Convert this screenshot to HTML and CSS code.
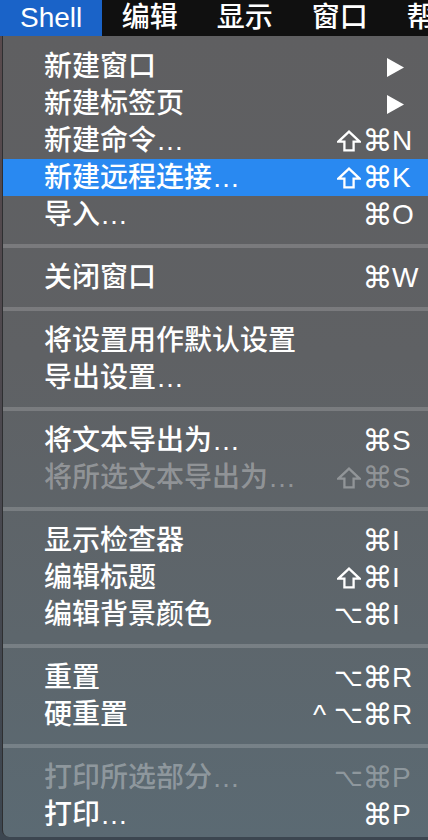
FILE: index.html
```html
<!DOCTYPE html>
<html lang="zh-CN">
<head>
<meta charset="utf-8">
<title>Shell 菜单</title>
<link rel="stylesheet" href="styles.css">
</head>
<body>
<div class="screen">
  <div class="menubar">
    <span class="title active">Shell</span>
    <span class="title">编辑</span>
    <span class="title">显示</span>
    <span class="title">窗口</span>
    <span class="title">帮助</span>
  </div>
  <div class="menu">
    <div class="item"><span class="label">新建窗口</span><span class="sub"><svg viewBox="0 0 18 19" width="18" height="19"><polygon points="1,0 18,9.5 1,19" fill="#fff"/></svg></span></div>
    <div class="item"><span class="label">新建标签页</span><span class="sub"><svg viewBox="0 0 18 19" width="18" height="19"><polygon points="1,0 18,9.5 1,19" fill="#fff"/></svg></span></div>
    <div class="item"><span class="label">新建命令…</span><span class="mods"><span class="m"><svg class="shift" viewBox="0 0 24 22" width="24" height="22" role="img" aria-label="⇧"><path d="M12 1.6 L22.6 11.6 H16.6 V20.4 H7.4 V11.6 H1.4 Z" fill="none" stroke="currentColor" stroke-width="2.3" stroke-linejoin="miter"/></svg></span><span class="m">⌘</span></span><span class="key">N</span></div>
    <div class="item selected"><span class="label">新建远程连接…</span><span class="mods"><span class="m"><svg class="shift" viewBox="0 0 24 22" width="24" height="22" role="img" aria-label="⇧"><path d="M12 1.6 L22.6 11.6 H16.6 V20.4 H7.4 V11.6 H1.4 Z" fill="none" stroke="currentColor" stroke-width="2.3" stroke-linejoin="miter"/></svg></span><span class="m">⌘</span></span><span class="key">K</span></div>
    <div class="item"><span class="label">导入…</span><span class="mods"><span class="m">⌘</span></span><span class="key">O</span></div>
    <div class="sep"></div>
    <div class="item"><span class="label">关闭窗口</span><span class="mods"><span class="m">⌘</span></span><span class="key">W</span></div>
    <div class="sep"></div>
    <div class="item"><span class="label">将设置用作默认设置</span></div>
    <div class="item"><span class="label">导出设置…</span></div>
    <div class="sep"></div>
    <div class="item"><span class="label">将文本导出为…</span><span class="mods"><span class="m">⌘</span></span><span class="key">S</span></div>
    <div class="item disabled"><span class="label">将所选文本导出为…</span><span class="mods"><span class="m"><svg class="shift" viewBox="0 0 24 22" width="24" height="22" role="img" aria-label="⇧"><path d="M12 1.6 L22.6 11.6 H16.6 V20.4 H7.4 V11.6 H1.4 Z" fill="none" stroke="currentColor" stroke-width="2.3" stroke-linejoin="miter"/></svg></span><span class="m">⌘</span></span><span class="key">S</span></div>
    <div class="sep"></div>
    <div class="item"><span class="label">显示检查器</span><span class="mods"><span class="m">⌘</span></span><span class="key">I</span></div>
    <div class="item"><span class="label">编辑标题</span><span class="mods"><span class="m"><svg class="shift" viewBox="0 0 24 22" width="24" height="22" role="img" aria-label="⇧"><path d="M12 1.6 L22.6 11.6 H16.6 V20.4 H7.4 V11.6 H1.4 Z" fill="none" stroke="currentColor" stroke-width="2.3" stroke-linejoin="miter"/></svg></span><span class="m">⌘</span></span><span class="key">I</span></div>
    <div class="item"><span class="label">编辑背景颜色</span><span class="mods"><span class="m opt">⌥</span><span class="m">⌘</span></span><span class="key">I</span></div>
    <div class="sep"></div>
    <div class="item"><span class="label">重置</span><span class="mods"><span class="m opt">⌥</span><span class="m">⌘</span></span><span class="key">R</span></div>
    <div class="item"><span class="label">硬重置</span><span class="mods"><span class="m caret">^</span><span class="m opt">⌥</span><span class="m">⌘</span></span><span class="key">R</span></div>
    <div class="sep"></div>
    <div class="item disabled"><span class="label">打印所选部分…</span><span class="mods"><span class="m opt">⌥</span><span class="m">⌘</span></span><span class="key">P</span></div>
    <div class="item"><span class="label">打印…</span><span class="mods"><span class="m">⌘</span></span><span class="key">P</span></div>
  </div>
</div>
</body>
</html>
```

FILE: styles.css
```css
html, body {
  margin: 0;
  padding: 0;
}
body {
  background: #3a3a3a;
  width: 428px;
  height: 840px;
  overflow: hidden;
  font-family: "Liberation Sans", "Noto Sans CJK SC", sans-serif;
  color: #fff;
}
.screen {
  display: flex;
  flex-direction: column;
  height: 840px;
  background: linear-gradient(180deg, #5a4a4c 0%, #3c4650 100%);
}
.menubar {
  display: flex;
  height: 36px;
  background: #101010;
  flex: none;
  white-space: nowrap;
  overflow: hidden;
}
.title {
  font-size: 28px;
  line-height: 36px;
  padding: 0 19.5px;
  color: #fff;
  font-weight: 500;
}
.title.active {
  background: #1a63c8;
  padding: 0 20px;
}
.menu {
  margin-left: 2px;
  border-left: 1px solid #2e2f31;
  border-bottom-left-radius: 7px;
  background: linear-gradient(180deg, #5f5f61 0%, #5f6164 40%, #5d666c 75%, #5b6a73 100%);
  padding: 12px 0 4px;
  height: 785px;
}
.item {
  display: grid;
  grid-template-columns: 1fr 87px 36px;
  align-items: center;
  height: 37px;
  font-size: 28px;
  line-height: 37px;
  font-weight: 500;
}
.item.selected {
  background: #2989f1;
}
.item.disabled {
  color: rgba(255, 255, 255, 0.32);
}
.label {
  grid-column: 1;
  padding-left: 41px;
  padding-bottom: 3px;
  white-space: nowrap;
}
.mods {
  grid-column: 2;
  display: flex;
  justify-content: flex-end;
  align-items: center;
  height: 37px;
  padding-bottom: 3px;
}
.m {
  width: 29px;
  display: flex;
  justify-content: center;
  align-items: center;
  overflow: hidden;
  font-family: "DejaVu Sans", sans-serif;
  font-size: 30px;
  font-weight: 400;
}
.m.opt {
  font-size: 25px;
}
.m .shift {
  display: block;
  margin-top: 1px;
}
.m.caret {
  font-family: "Liberation Sans", sans-serif;
  font-size: 28px;
  align-items: flex-start;
  height: 37px;
  line-height: 37px;
}
.key {
  grid-column: 3;
  padding-bottom: 3px;
}
.sub {
  grid-column: 2 / 4;
  justify-self: end;
  display: flex;
  margin-right: 24px;
  padding-bottom: 2px;
}
.sep {
  height: 4px;
  margin: 11px 0;
  background: rgba(255, 255, 255, 0.17);
}
```
